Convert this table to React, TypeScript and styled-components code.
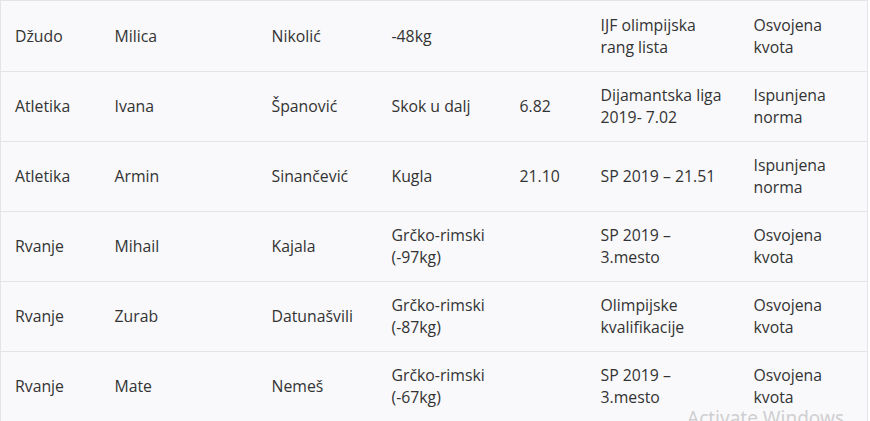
import React from 'react';
import styled, { createGlobalStyle } from 'styled-components';

const GlobalStyle = createGlobalStyle`
  html, body {
    margin: 0;
    padding: 0;
    background: #ffffff;
    font-family: 'Open Sans', 'Noto Sans', sans-serif;
  }
`;

const Page = styled.div`
  position: relative;
  width: 870px;
  height: 421px;
  overflow: hidden;
`;

const Table = styled.table`
  width: 867px;
  border-collapse: collapse;
  table-layout: fixed;
  background: #f9f9fb;
  border: 1px solid #e4e4e6;
  color: #333333;
  font-size: 15.8px;
  line-height: 22px;

  tr:first-child td {
    padding-top: 13px;
  }
`;

const Row = styled.tr`
  border-top: 1px solid #e4e4e6;
`;

const Cell = styled.td`
  padding: 12px 14px 13px 14px;
  vertical-align: middle;
  height: 44px;
`;

const Watermark = styled.div`
  position: absolute;
  left: 687px;
  top: 409px;
  font-family: 'Noto Sans', 'Open Sans', sans-serif;
  font-size: 19px;
  line-height: 1;
  color: #cfcfd1;
  white-space: nowrap;
  pointer-events: none;
`;

const widths = [100, 157, 120, 128, 81, 153, 128];

const rows: string[][] = [
  ['Džudo', 'Milica', 'Nikolić', '-48kg', '', 'IJF olimpijska rang lista', 'Osvojena kvota'],
  ['Atletika', 'Ivana', 'Španović', 'Skok u dalj', '6.82', 'Dijamantska liga 2019- 7.02', 'Ispunjena norma'],
  ['Atletika', 'Armin', 'Sinančević', 'Kugla', '21.10', 'SP 2019 – 21.51', 'Ispunjena norma'],
  ['Rvanje', 'Mihail', 'Kajala', 'Grčko-rimski (-97kg)', '', 'SP 2019 – 3.mesto', 'Osvojena kvota'],
  ['Rvanje', 'Zurab', 'Datunašvili', 'Grčko-rimski (-87kg)', '', 'Olimpijske kvalifikacije', 'Osvojena kvota'],
  ['Rvanje', 'Mate', 'Nemeš', 'Grčko-rimski (-67kg)', '', 'SP 2019 – 3.mesto', 'Osvojena kvota'],
];

export default function App() {
  return (
    <Page>
      <GlobalStyle />
      <Table>
        <colgroup>
          {widths.map((w, i) => (
            <col key={i} style={{ width: w }} />
          ))}
        </colgroup>
        <tbody>
          {rows.map((r, i) => (
            <Row key={i}>
              {r.map((c, j) => (
                <Cell key={j}>{c}</Cell>
              ))}
            </Row>
          ))}
        </tbody>
      </Table>
      <Watermark>Activate Windows</Watermark>
    </Page>
  );
}
